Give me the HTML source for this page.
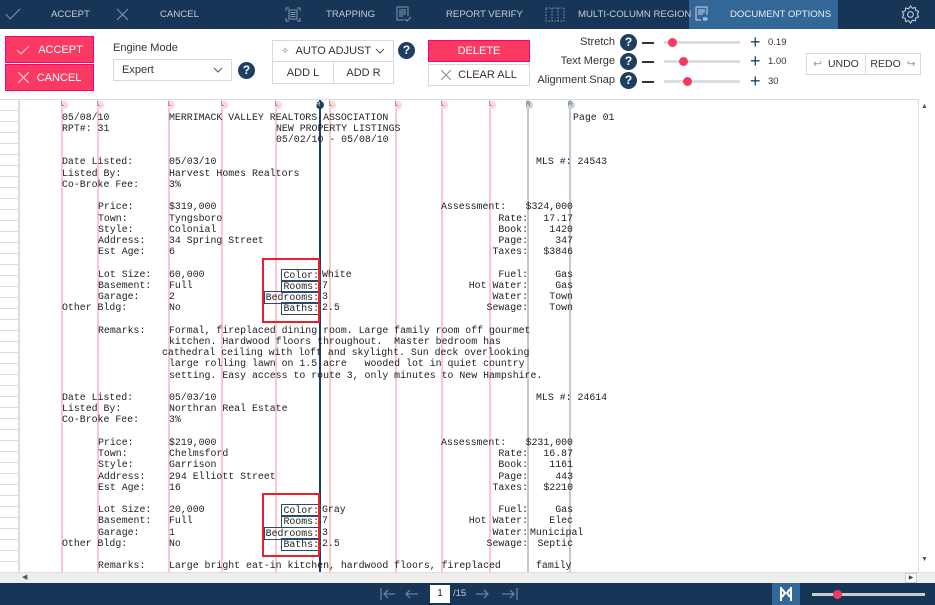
<!DOCTYPE html>
<html><head><meta charset="utf-8"><style>
*{box-sizing:border-box;margin:0;padding:0}
body{width:935px;height:605px;overflow:hidden;background:#fff;font-family:"Liberation Sans",sans-serif;position:relative}
.a{position:absolute}
#top{left:0;top:0;width:935px;height:29px;background:#173657}
#top .t{color:#c3cdd8;font-size:9.6px;top:9px;position:absolute}
#tab{left:689px;top:0;width:149px;height:29px;background:#336797}
.btn{position:absolute;font-size:11px;display:flex;align-items:center;justify-content:center}
.pk{background:#fb3a64;color:#fff;border:1px solid #f07}
.wb{background:#fff;color:#333;border:1px solid #d9d9d9}
.q{position:absolute;width:17px;height:17px;border-radius:50%;background:#1e3f63;color:#fff;font-weight:bold;font-size:12px;text-align:center;line-height:17px}
.lbl{position:absolute;font-size:11px;color:#333;text-align:right}
.trk{position:absolute;height:3px;background:#ddd;width:76px;left:664px}
.kn{position:absolute;width:9px;height:9px;border-radius:50%;background:#f53a60}
.mn{position:absolute;left:642px;width:12px;height:1.5px;background:#333}
.pl{position:absolute;left:750px;font-size:18px;color:#1e3f63;line-height:14px}
.vl{position:absolute;font-size:9.5px;color:#333;left:768px}
#doc{left:0;top:99px;width:918px;height:473px;overflow:hidden;border-top:1px solid #ddd}
#txt{position:absolute;left:0;top:-99px;width:935px;height:672px;font-family:"Liberation Mono",monospace;font-size:9.9px;color:#222}
#txt div.w{position:absolute;left:0;width:935px;height:11px;line-height:11px;white-space:pre}
#txt span{position:absolute;white-space:pre}
#txt div.r{position:absolute;top:99px;width:2px;height:480px;background:#ffc6d0}
#txt div.m{position:absolute;top:100px;width:7px;height:8px;border-radius:0 4px 4px 0;background:#ffd6de;font-size:6px;line-height:8px;color:#555;font-family:"Liberation Sans",sans-serif}
.b{border:1px solid #2a4a6e;padding:0 1px;margin-right:-1px}
</style></head><body>
<div id="top" class="a">
 <div id="tab" class="a"></div>
 <svg class="a" style="left:5px;top:8px" width="16" height="12"><path d="M1 6l4 5 10-10" stroke="#8497ad" fill="none" stroke-width="1"/></svg>
 <span class="t" style="left:51px">ACCEPT</span>
 <svg class="a" style="left:116px;top:8px" width="13" height="13"><path d="M1 1l11 11M12 1L1 12" stroke="#8497ad" stroke-width="1"/></svg>
 <span class="t" style="left:160px">CANCEL</span>
 <svg class="a" style="left:285px;top:7px" width="16" height="15"><path d="M1 4V1h3M12 1h3v3M15 11v3h-3M4 14H1v-3M4 3h8v9H4zM5.5 5.5h5M5.5 7.5h5M5.5 9.5h5" stroke="#8497ad" fill="none"/></svg>
 <span class="t" style="left:326px">TRAPPING</span>
 <svg class="a" style="left:396px;top:6px" width="16" height="16"><path d="M1 1h11v9M1 1v13h7M3 4h7M3 6h7M3 8h7M3 10h4M9 13l2 2 4-4" stroke="#8497ad" fill="none"/></svg>
 <span class="t" style="left:446px">REPORT VERIFY</span>
 <svg class="a" style="left:545px;top:7px" width="20" height="15"><path d="M1 1h18v13H1zM7 1v13M13 1v13" stroke="#8497ad" fill="none" stroke-dasharray="1.5 1.5"/></svg>
 <span class="t" style="left:578px">MULTI-COLUMN REGION</span>
 <svg class="a" style="left:695px;top:6px" width="14" height="16"><path d="M1 1h11v8M1 1v13h5M3 4h7M3 6h7M3 8h5M9 11v4M11 11v4M8 13h5" stroke="#c9d4df" fill="none"/></svg>
 <span class="t" style="left:730px;color:#e9eef3">DOCUMENT OPTIONS</span>
 <svg class="a" style="left:901px;top:5px" width="19" height="19" viewBox="0 0 20 20"><path d="M10 1l2 2.5 3-.8.6 3 2.9 1.2-1.3 2.8 1.3 2.8-2.9 1.2-.6 3-3-.8L10 19l-2-2.5-3 .8-.6-3L1.5 13l1.3-2.8L1.5 7.4l2.9-1.2.6-3 3 .8z" fill="none" stroke="#c9d4df" stroke-width="1.1"/><circle cx="10" cy="10" r="3" fill="none" stroke="#c9d4df" stroke-width="1.1"/></svg>
</div>

<div class="btn pk" style="left:5px;top:36px;width:89px;height:27px"><svg width="14" height="10" style="margin-right:8px"><path d="M1 5l4 4 8-8" stroke="#fcc" fill="none"/></svg>ACCEPT</div>
<div class="btn pk" style="left:5px;top:64px;width:89px;height:27px"><svg width="11" height="11" style="margin-right:8px"><path d="M0 0l11 11M11 0L0 11" stroke="#fdd" fill="none"/></svg>CANCEL</div>
<div class="lbl" style="left:113px;top:42px">Engine Mode</div>
<div class="btn wb" style="left:113px;top:59px;width:119px;height:22px;justify-content:space-between;padding:0 8px"><span>Expert</span><svg width="10" height="6"><path d="M1 1l4 4 4-4" stroke="#555" fill="none"/></svg></div>
<div class="q" style="left:238px;top:62px">?</div>
<div class="btn wb" style="left:272px;top:40px;width:122px;height:22px;justify-content:space-between;padding:0 8px"><span style="color:#333"><span style="color:#777;font-size:10px">&#10023;</span>&nbsp;&nbsp;AUTO ADJUST</span><svg width="10" height="6"><path d="M1 1l4 4 4-4" stroke="#555" fill="none"/></svg></div>
<div class="btn wb" style="left:272px;top:61px;width:62px;height:23px">ADD L</div>
<div class="btn wb" style="left:333px;top:61px;width:61px;height:23px">ADD R</div>
<div class="q" style="left:398px;top:42px">?</div>
<div class="btn pk" style="left:428px;top:40px;width:102px;height:22px">DELETE</div>
<div class="btn wb" style="left:428px;top:64px;width:102px;height:22px"><svg width="10" height="10" style="margin-right:7px"><path d="M0 0l10 10M10 0L0 10" stroke="#888" fill="none"/></svg>CLEAR ALL</div>

<div class="lbl" style="right:320px;top:36px">Stretch</div>
<div class="lbl" style="right:320px;top:55px">Text Merge</div>
<div class="lbl" style="right:320px;top:74px">Alignment Snap</div>
<div class="q" style="left:620px;top:34px">?</div>
<div class="q" style="left:620px;top:53px">?</div>
<div class="q" style="left:620px;top:72px">?</div>
<div class="mn" style="top:42px"></div><div class="mn" style="top:61px"></div><div class="mn" style="top:81px"></div>
<div class="trk" style="top:41px"></div><div class="trk" style="top:60px"></div><div class="trk" style="top:80px"></div>
<div class="kn" style="left:668px;top:38px"></div><div class="kn" style="left:679px;top:57px"></div><div class="kn" style="left:683px;top:77px"></div>
<div class="pl" style="top:35px">+</div><div class="pl" style="top:54px">+</div><div class="pl" style="top:74px">+</div>
<div class="vl" style="top:37px">0.19</div><div class="vl" style="top:56px">1.00</div><div class="vl" style="top:76px">30</div>
<div class="btn wb" style="left:806px;top:53px;width:60px;height:22px;font-size:10.5px"><span style="color:#999;margin-right:6px">&#8617;</span>UNDO</div>
<div class="btn wb" style="left:865px;top:53px;width:56px;height:22px;font-size:10.5px">REDO<span style="color:#999;margin-left:6px">&#8618;</span></div>

<div id="doc" class="a">
<div class="a" style="left:0;top:0;width:20px;height:473px;background:repeating-linear-gradient(#fff 0,#fff 10px,#ddd 10px,#ddd 11px);border-right:2px solid #ddd"></div>
<div id="txt">
<div class="r" style="left:61px"></div><div class="r" style="left:97px"></div><div class="r" style="left:168px"></div><div class="r" style="left:221px"></div><div class="r" style="left:275px"></div><div class="r" style="left:329px"></div><div class="r" style="left:395px"></div><div class="r" style="left:441px"></div><div class="r" style="left:489px"></div>
<div class="r" style="left:527px;background:#bccad8"></div><div class="r" style="left:569px;background:#bccad8"></div>
<div class="r" style="left:319px;background:#1d3f63"></div>
<div class="m" style="left:61px">L</div><div class="m" style="left:97px">L</div><div class="m" style="left:168px">L</div><div class="m" style="left:221px">L</div><div class="m" style="left:275px">L</div><div class="m" style="left:329px">L</div><div class="m" style="left:395px">L</div><div class="m" style="left:441px">L</div><div class="m" style="left:489px">L</div>
<div class="m" style="left:526px;background:#c8d3de">R</div><div class="m" style="left:568px;background:#c8d3de">R</div><div class="m" style="left:316px;background:#1d3f63;color:#fff;border-radius:4px;width:8px">R</div>

<div class="w" style="top:110.5px"><span style="left:62px">05/08/10</span><span style="left:169px">MERRIMACK VALLEY REALTORS ASSOCIATION</span><span style="left:573px">Page 01</span></div>
<div class="w" style="top:121.7px"><span style="left:62px">RPT#: 31</span><span style="left:276px">NEW PROPERTY LISTINGS</span></div>
<div class="w" style="top:132.9px"><span style="left:276px">05/02/10 - 05/08/10</span></div>
<div class="w" style="top:155.4px"><span style="left:62px">Date Listed:</span><span style="left:169px">05/03/10</span><span style="left:536px">MLS #: 24543</span></div>
<div class="w" style="top:166.6px"><span style="left:62px">Listed By:</span><span style="left:169px">Harvest Homes Realtors</span></div>
<div class="w" style="top:177.8px"><span style="left:62px">Co-Broke Fee:</span><span style="left:169px">3%</span></div>
<div class="w" style="top:200.3px"><span style="left:98px">Price:</span><span style="left:169px">$319,000</span><span style="left:441px">Assessment:</span><span style="right:362px">$324,000</span></div>
<div class="w" style="top:211.5px"><span style="left:98px">Town:</span><span style="left:169px">Tyngsboro</span><span style="right:407px">Rate:</span><span style="right:362px">17.17</span></div>
<div class="w" style="top:222.7px"><span style="left:98px">Style:</span><span style="left:169px">Colonial</span><span style="right:407px">Book:</span><span style="right:362px">1420</span></div>
<div class="w" style="top:233.9px"><span style="left:98px">Address:</span><span style="left:169px">34 Spring Street</span><span style="right:407px">Page:</span><span style="right:362px">347</span></div>
<div class="w" style="top:245.1px"><span style="left:98px">Est Age:</span><span style="left:169px">6</span><span style="right:407px">Taxes:</span><span style="right:362px">$3846</span></div>
<div class="w" style="top:267.6px"><span style="left:98px">Lot Size:</span><span style="left:169px">60,000</span><span style="right:615px" class="b">Color:</span><span style="left:322px">White</span><span style="right:407px">Fuel:</span><span style="right:362px">Gas</span></div>
<div class="w" style="top:278.8px"><span style="left:98px">Basement:</span><span style="left:169px">Full</span><span style="right:615px" class="b">Rooms:</span><span style="left:322px">7</span><span style="right:407px">Hot Water:</span><span style="right:362px">Gas</span></div>
<div class="w" style="top:290px"><span style="left:98px">Garage:</span><span style="left:169px">2</span><span style="right:615px" class="b">Bedrooms:</span><span style="left:322px">3</span><span style="right:407px">Water:</span><span style="right:362px">Town</span></div>
<div class="w" style="top:301.2px"><span style="left:62px">Other Bldg:</span><span style="left:169px">No</span><span style="right:615px" class="b">Baths:</span><span style="left:322px">2.5</span><span style="right:407px">Sewage:</span><span style="right:362px">Town</span></div>
<div class="w" style="top:323.7px"><span style="left:98px">Remarks:</span><span style="left:169px">Formal, fireplaced dining room. Large family room off gourmet</span></div>
<div class="w" style="top:334.9px"><span style="left:169px">kitchen. Hardwood floors throughout.  Master bedroom has</span></div>
<div class="w" style="top:346.1px"><span style="left:162px">cathedral ceiling with loft and skylight. Sun deck overlooking</span></div>
<div class="w" style="top:357.3px"><span style="left:169px">large rolling lawn on 1.5 acre   wooded lot in quiet country</span></div>
<div class="w" style="top:368.5px"><span style="left:169px">setting. Easy access to route 3, only minutes to New Hampshire.</span></div>

<div class="w" style="top:391px"><span style="left:62px">Date Listed:</span><span style="left:169px">05/03/10</span><span style="left:536px">MLS #: 24614</span></div>
<div class="w" style="top:402.2px"><span style="left:62px">Listed By:</span><span style="left:169px">Northran Real Estate</span></div>
<div class="w" style="top:413.4px"><span style="left:62px">Co-Broke Fee:</span><span style="left:169px">3%</span></div>
<div class="w" style="top:435.9px"><span style="left:98px">Price:</span><span style="left:169px">$219,000</span><span style="left:441px">Assessment:</span><span style="right:362px">$231,000</span></div>
<div class="w" style="top:447.1px"><span style="left:98px">Town:</span><span style="left:169px">Chelmsford</span><span style="right:407px">Rate:</span><span style="right:362px">16.87</span></div>
<div class="w" style="top:458.3px"><span style="left:98px">Style:</span><span style="left:169px">Garrison</span><span style="right:407px">Book:</span><span style="right:362px">1161</span></div>
<div class="w" style="top:469.5px"><span style="left:98px">Address:</span><span style="left:169px">294 Elliott Street</span><span style="right:407px">Page:</span><span style="right:362px">443</span></div>
<div class="w" style="top:480.7px"><span style="left:98px">Est Age:</span><span style="left:169px">16</span><span style="right:407px">Taxes:</span><span style="right:362px">$2210</span></div>
<div class="w" style="top:503.2px"><span style="left:98px">Lot Size:</span><span style="left:169px">20,000</span><span style="right:615px" class="b">Color:</span><span style="left:322px">Gray</span><span style="right:407px">Fuel:</span><span style="right:362px">Gas</span></div>
<div class="w" style="top:514.4px"><span style="left:98px">Basement:</span><span style="left:169px">Full</span><span style="right:615px" class="b">Rooms:</span><span style="left:322px">7</span><span style="right:407px">Hot Water:</span><span style="right:362px">Elec</span></div>
<div class="w" style="top:525.6px"><span style="left:98px">Garage:</span><span style="left:169px">1</span><span style="right:615px" class="b">Bedrooms:</span><span style="left:322px">3</span><span style="right:407px">Water:</span><span style="left:530px">Municipal</span></div>
<div class="w" style="top:536.8px"><span style="left:62px">Other Bldg:</span><span style="left:169px">No</span><span style="right:615px" class="b">Baths:</span><span style="left:322px">2.5</span><span style="right:407px">Sewage:</span><span style="right:362px">Septic</span></div>
<div class="w" style="top:559.3px"><span style="left:98px">Remarks:</span><span style="left:169px">Large bright eat-in kitchen, hardwood floors, fireplaced</span><span style="left:536px">family</span></div>
</div>
<div class="a" style="left:262px;top:158px;width:58px;height:65px;border:2px solid #e8202c"></div>
<div class="a" style="left:262px;top:393px;width:58px;height:64px;border:2px solid #e8202c"></div>
</div>

<div class="a" style="left:918px;top:99px;width:17px;height:473px;background:#fff;border-left:1px solid #ddd"></div>
<div class="a" style="left:921px;top:103px;font-size:7px;color:#555">&#9650;</div>
<div class="a" style="left:921px;top:556px;font-size:7px;color:#555">&#9660;</div>
<div class="a" style="left:0;top:572px;width:935px;height:11px;background:#eee;border-top:1px solid #ddd"></div>
<div class="a" style="left:22px;top:573px;font-size:7px;color:#555">&#9664;</div>
<div class="a" style="left:905px;top:573px;width:12px;height:10px;background:#fff;border:1px solid #ccc;font-size:6px;text-align:center;color:#444">&#9654;</div>

<div class="a" style="left:0;top:583px;width:935px;height:22px;background:#173657"></div>
<svg class="a" style="left:380px;top:587px" width="140" height="14"><g stroke="#6c819a" fill="none" stroke-width="1.3"><path d="M1 1v12M15 7H4M8 3L4 7l4 4M38 7H26M30 3l-4 4 4 4"/><path d="M96 7h12M104 3l4 4-4 4M122 7h12M130 3l4 4-4 4M137 1v12"/></g></svg>
<div class="a" style="left:430px;top:585px;width:20px;height:18px;background:#fff;font-size:10px;text-align:center;line-height:18px;color:#222">1</div>
<div class="a" style="left:453px;top:588px;font-size:9.5px;color:#c3cdd8">/15</div>
<div class="a" style="left:772px;top:583px;width:28px;height:22px;background:#336797"></div>
<svg class="a" style="left:780px;top:586px" width="12" height="16"><path d="M1 1v14M11 1v14M2 3l3 4-3 4M10 3L7 7l3 4" stroke="#fff" stroke-width="2" fill="none"/></svg>
<div class="a" style="left:812px;top:593px;width:113px;height:3px;background:#ccc"></div>
<div class="kn" style="left:833px;top:590px"></div>
</body></html>
